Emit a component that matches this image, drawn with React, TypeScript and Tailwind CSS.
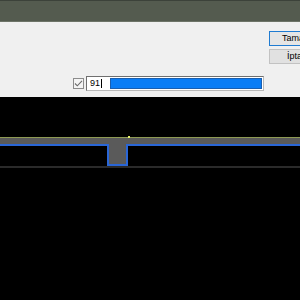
import React from 'react';

export default function App() {
    return (
        <div className="w-[300px] h-[300px] overflow-hidden bg-black flex flex-col" style={{ fontFamily: '"Liberation Sans", "DejaVu Sans", sans-serif' }}>
            {/* Title bar */}
            <div className="h-[22px] shrink-0 bg-[#545b4f] border-t border-[#3c423a] border-b border-b-[#6d7468]" />

            {/* Dialog body */}
            <div className="h-[75px] shrink-0 bg-[#f0f0f0] flex">
                <div className="flex-1 flex items-end pb-[6px]">
                    <div className="ml-[73px] flex items-center gap-[2px]">
                        <div className="w-[11px] h-[11px] border border-[#8c8c8c] bg-[#f4f4f4] flex items-center justify-center">
                            <svg width="9" height="9" viewBox="0 0 9 9" fill="none">
                                <path d="M1 4.5l2.3 2.3L8 1.8" stroke="#6b6b6b" strokeWidth="1.1" />
                            </svg>
                        </div>
                        <div className="w-[178px] h-[15px] border border-[#6f6f6f] border-r-[#b8b8b8] border-b-[#b8b8b8] bg-white flex p-[1px]">
                            <div className="w-[22px] flex items-center pl-[2px] text-[9px] leading-none text-black">
                                91<span className="w-px h-[9px] bg-black ml-[1px]" />
                            </div>
                            <div className="flex-1 bg-[#0a7df5] border border-[#1a5fb0]" />
                        </div>
                    </div>
                </div>
                <div className="w-[31px] pt-[9px] flex flex-col gap-[3px]">
                    <div className="w-[75px] h-[15px] bg-[#e5e5e5] border border-[#1f7bd1] text-[9px] leading-none text-black flex items-center pl-[12px]">
                        Tamam
                    </div>
                    <div className="w-[75px] h-[15px] bg-[#e1e1e1] border border-[#c2c2c2] text-[9px] leading-none text-black flex items-center pl-[17px]">
                        İptal
                    </div>
                </div>
            </div>

            {/* Canvas */}
            <div className="h-[40px] shrink-0" />
            <div className="relative h-px shrink-0 bg-[#8e9a54]">
                <div className="absolute left-[128px] top-[-1px] w-[2px] h-[2px] bg-[#e6f06a]" />
            </div>
            <div className="h-[8px] shrink-0 bg-[#5a5a5a] border-b-2 border-solid border-[#2a66d6]" />
            <div className="flex h-[22px] shrink-0 -mt-[2px]">
                <div className="ml-[107px] w-[21px] bg-[#5a5a5a] border-x-2 border-b-2 border-solid border-[#2a66d6]" />
            </div>
            <div className="h-[2px] shrink-0 bg-[#2a2a2a]" />
        </div>
    );
}
